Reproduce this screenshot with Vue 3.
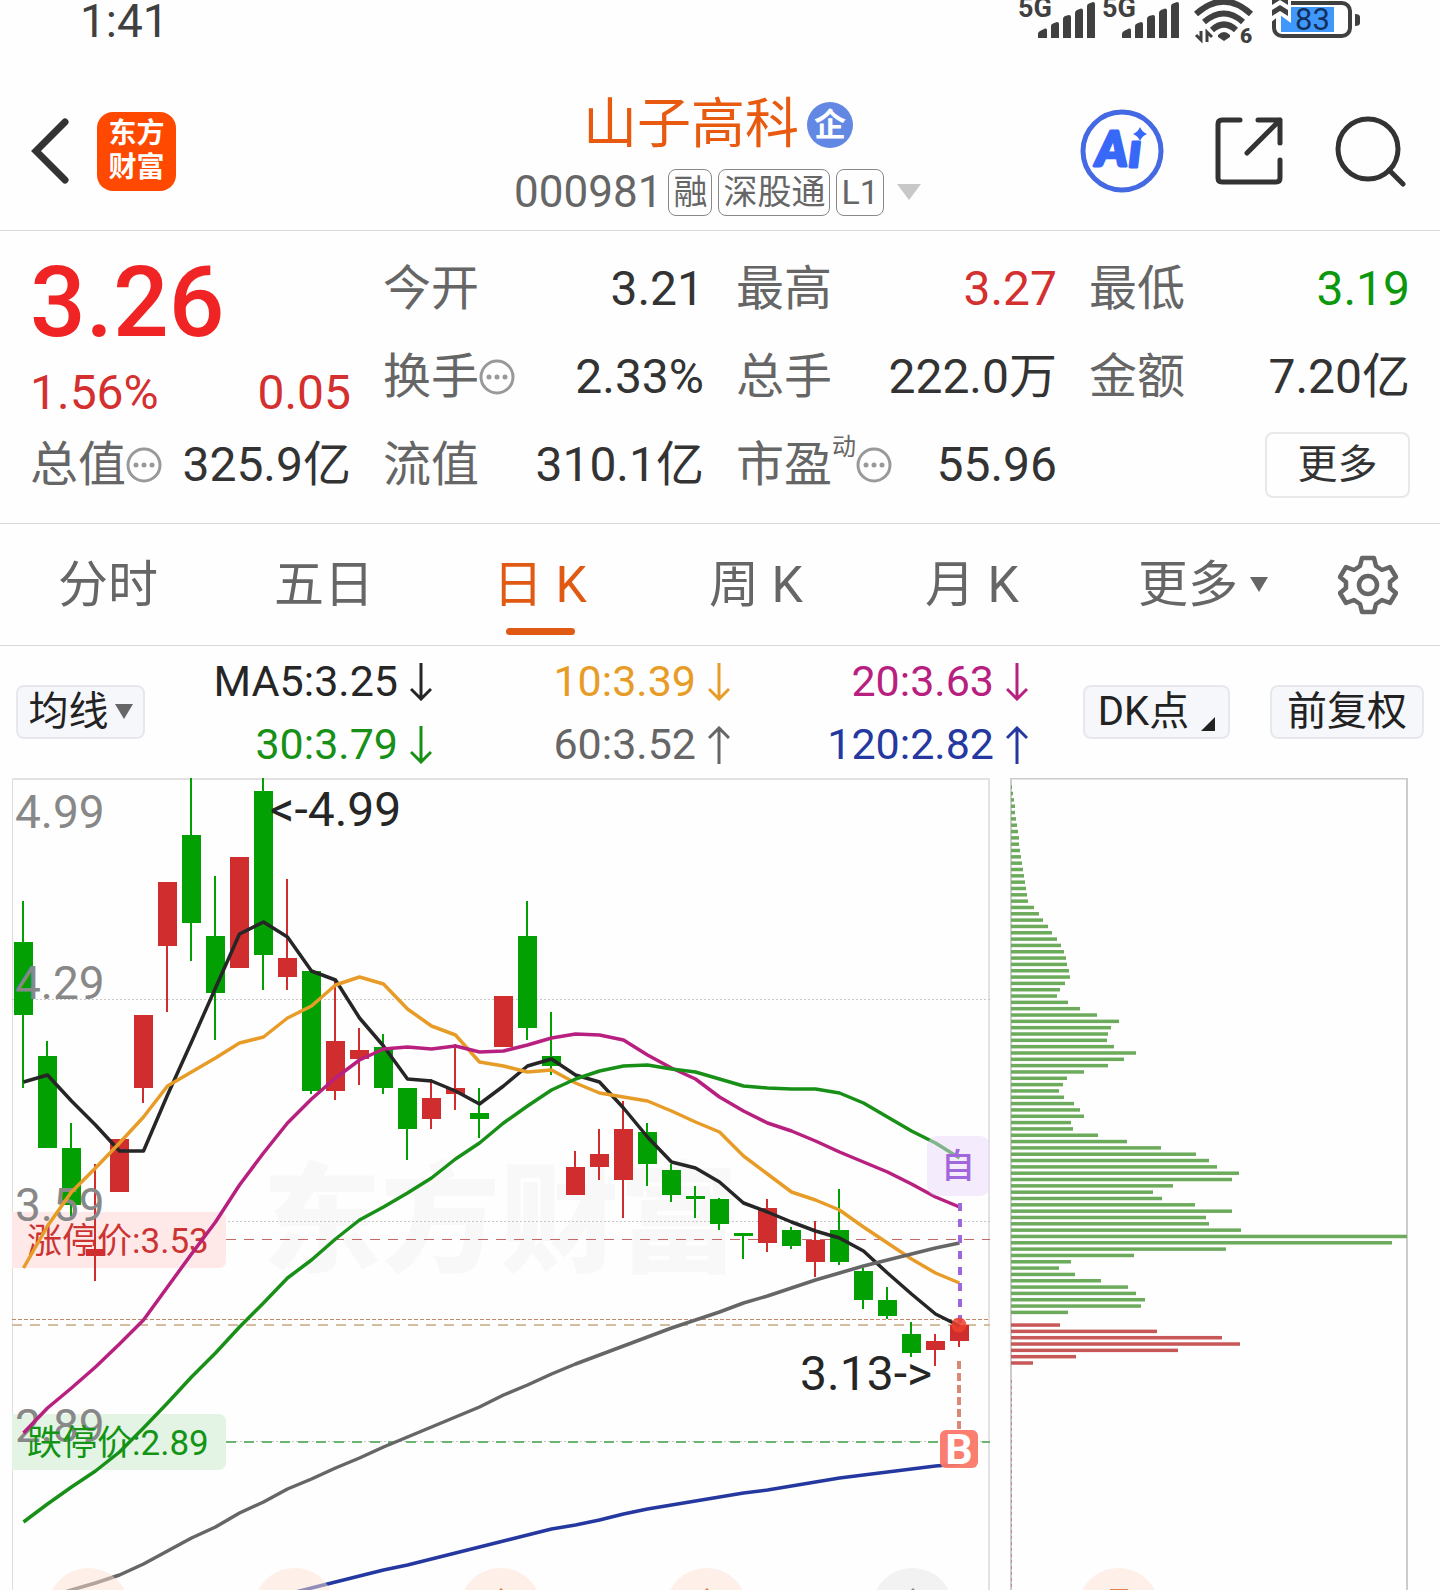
<script setup>
import { ref } from 'vue'

const activeTab = ref('日 K')
const tabs = ['分时', '五日', '日 K', '周 K', '月 K']

const quotes = [
  { label: '今开', value: '3.21' },
  { label: '最高', value: '3.27', tone: 'up' },
  { label: '最低', value: '3.19', tone: 'down' },
  { label: '换手', value: '2.33%', info: true },
  { label: '总手', value: '222.0万' },
  { label: '金额', value: '7.20亿' },
  { label: '总值', value: '325.9亿', info: true },
  { label: '流值', value: '310.1亿' },
  { label: '市盈', value: '55.96', sup: '动', info: true }
]

const averages = [
  { name: 'ma5', text: 'MA5:3.25', up: false },
  { name: 'ma10', text: '10:3.39', up: false },
  { name: 'ma20', text: '20:3.63', up: false },
  { name: 'ma30', text: '30:3.79', up: false },
  { name: 'ma60', text: '60:3.52', up: true },
  { name: 'ma120', text: '120:2.82', up: true }
]

// [color, high, body top, body bottom, low]
const candles = [
  ['g', 901, 942, 1015, 1088], ['g', 1041, 1056, 1148, 1148], ['g', 1123, 1148, 1205, 1216],
  ['r', 1164, 1249, 1256, 1281], ['r', 1139, 1139, 1192, 1192], ['r', 1015, 1015, 1088, 1103],
  ['r', 882, 882, 946, 1012], ['g', 778, 835, 923, 961], ['g', 876, 936, 993, 1040],
  ['r', 857, 857, 968, 968], ['g', 778, 791, 955, 990], ['r', 879, 958, 977, 990],
  ['g', 971, 971, 1091, 1094], ['r', 981, 1041, 1091, 1100], ['r', 1028, 1050, 1059, 1085],
  ['g', 1034, 1047, 1088, 1094], ['g', 1088, 1088, 1129, 1160], ['r', 1079, 1098, 1119, 1129],
  ['r', 1044, 1088, 1094, 1110], ['g', 1088, 1113, 1119, 1138], ['r', 996, 996, 1047, 1047],
  ['g', 901, 936, 1028, 1040], ['g', 1012, 1056, 1066, 1075], ['r', 1151, 1167, 1195, 1195],
  ['r', 1129, 1154, 1167, 1180], ['r', 1101, 1129, 1180, 1218], ['g', 1123, 1132, 1164, 1186],
  ['g', 1164, 1170, 1195, 1202], ['g', 1186, 1196, 1199, 1218], ['g', 1198, 1199, 1224, 1230],
  ['g', 1233, 1233, 1236, 1259], ['r', 1199, 1208, 1243, 1252], ['g', 1227, 1230, 1246, 1249],
  ['r', 1221, 1240, 1262, 1277], ['g', 1189, 1230, 1262, 1265], ['g', 1268, 1271, 1300, 1309],
  ['g', 1287, 1300, 1316, 1319], ['g', 1322, 1334, 1353, 1357], ['r', 1334, 1341, 1350, 1366],
  ['r', 1325, 1325, 1341, 1347]
]

const lines = {
  ma5: [1082, 1075, 1101, 1125, 1151, 1151, 1095, 1042, 988, 934, 922, 937, 971, 980, 1018, 1046, 1079, 1081, 1091, 1104, 1086, 1066, 1059, 1075, 1082, 1108, 1137, 1162, 1168, 1182, 1203, 1212, 1222, 1231, 1238, 1251, 1273, 1294, 1314, 1326],
  ma10: [1268, 1226, 1192, 1168, 1143, 1117, 1086, 1072, 1058, 1043, 1037, 1018, 1006, 985, 977, 984, 1009, 1026, 1035, 1062, 1066, 1072, 1070, 1083, 1093, 1097, 1101, 1111, 1122, 1132, 1156, 1174, 1192, 1200, 1210, 1227, 1243, 1259, 1273, 1283],
  ma20: [1433, 1408, 1388, 1367, 1344, 1320, 1287, 1254, 1222, 1185, 1153, 1123, 1099, 1078, 1060, 1049, 1047, 1049, 1046, 1052, 1051, 1045, 1038, 1034, 1035, 1040, 1055, 1068, 1079, 1097, 1111, 1123, 1131, 1141, 1152, 1162, 1172, 1184, 1197, 1207],
  ma30: [1522, 1504, 1487, 1471, 1452, 1428, 1403, 1377, 1353, 1327, 1303, 1278, 1260, 1239, 1220, 1207, 1193, 1178, 1159, 1143, 1123, 1106, 1090, 1079, 1071, 1066, 1065, 1069, 1072, 1079, 1086, 1088, 1089, 1089, 1093, 1103, 1117, 1131, 1143, 1158],
  ma60: [1605, 1597, 1590, 1583, 1575, 1564, 1551, 1538, 1527, 1513, 1502, 1489, 1479, 1468, 1458, 1447, 1437, 1427, 1417, 1407, 1395, 1385, 1374, 1364, 1355, 1346, 1337, 1328, 1320, 1312, 1303, 1296, 1288, 1280, 1273, 1266, 1260, 1254, 1248, 1243],
  ma120: [1662, 1656, 1650, 1644, 1638, 1632, 1626, 1619, 1613, 1607, 1600, 1594, 1588, 1582, 1576, 1570, 1565, 1559, 1553, 1547, 1541, 1535, 1529, 1525, 1520, 1514, 1509, 1505, 1501, 1497, 1493, 1490, 1486, 1482, 1478, 1475, 1472, 1469, 1466, 1464]
}

const step = 24
const centerX = (i) => 23.5 + i * step
const toPoints = (ys) => ys.map((y, i) => `${centerX(i)},${y}`).join(' ')

const gridLines = [999, 1221, 1441]
const axisLabels = [
  { text: '4.99', y: 828 },
  { text: '4.29', y: 999 },
  { text: '3.59', y: 1221 },
  { text: '2.89', y: 1442 }
]

// 筹码分布，自上而下
const chips = [
  1, 2, 3, 4, 4, 5, 6, 7, 8, 8, 9, 10, 11, 12, 13, 14, 15, 16, 17, 23,
  28, 32, 37, 41, 46, 50, 53, 55, 56, 58, 59, 54, 49, 46, 57, 69, 86, 108, 100, 97,
  96, 103, 125, 113, 97, 73, 56, 52, 48, 53, 63, 69, 73, 60, 62, 87, 116, 150, 185, 198,
  206, 228, 221, 162, 142, 151, 184, 221, 195, 198, 230, 396, 381, 215, 123, 60, 48, 64, 90, 117,
  125, 134, 130, 57, 0, 49, 146, 211, 229, 167, 65, 22
]
const chipY = (i) => 785.5 + i * 6.327

const tools = ['诊股', '资讯', '提醒', '交易', '更多', '自选']
</script>

<template>
  <div class="page">
    <!-- 状态栏 -->
    <div class="status-bar">
      <span class="clock">1:41</span>
      <svg class="status-icons" viewBox="1016 0 348 46" aria-hidden="true">
        <g v-for="dx in [0, 84]" :key="dx" :transform="`translate(${dx} 0)`" fill="#404040">
          <text x="1018" y="17" class="net">5G</text>
          <path d="M1038 38v-4q0-2 2-3l5-2.500q2-.5 2 1.500v8zM1051 38v-12q0-2 2-2.500l4-1.500q2 0 2 2v14zM1063 38v-19q0-2 2-3l4-1q2 0 2 2v21zM1075 38v-25q0-2 2-3l4-1.500q2 0 2 2v27.500zM1087 38v-32q0-2 2-2.500l4-1.500q2 0 2 2v34z" />
        </g>
        <g fill="none" stroke="#404040" stroke-width="6">
          <path d="M1196 14q28-25 55 0" />
          <path d="M1204 22q20-17 39 0" />
          <path d="M1212 30q12-11 24 0" />
        </g>
        <path d="M1218 35q6-6 12 0v2l-6 4-6-4z" fill="#404040" />
        <path d="M1201 31v9l-5-5M1207 42v-10l5 5" fill="none" stroke="#404040" stroke-width="3" />
        <text x="1240" y="43" class="wifi-six">6</text>
        <rect x="1274" y="3" width="76" height="33" rx="8" fill="#fff" stroke="#404040" stroke-width="4" />
        <rect x="1281" y="7" width="53" height="25" fill="#4098fc" />
        <path d="M1355 14q5 0 5 3v6q0 3-5 3z" fill="#404040" />
        <path d="M1270-2h21v25l-11-8-10 8z" fill="#fefefe" />
        <path d="M1272 5v-6l8-5 8 5v6l-8-5zM1272 16v-6l8-5 8 5v6l-8-5z" fill="#404040" />
        <text x="1295" y="30" class="battery">83</text>
      </svg>
    </div>

    <!-- 顶部导航 -->
    <header class="nav">
      <div class="nav-side">
        <button class="icon-button" aria-label="返回">
          <svg width="40" height="68" viewBox="0 0 40 68">
            <path d="M35 5L6 34l29 29" fill="none" stroke="#333" stroke-width="7" stroke-linecap="round" stroke-linejoin="miter" />
          </svg>
        </button>
        <a class="logo" href="#">东方<br />财富</a>
      </div>
      <div class="stock">
        <h1 class="stock-name">山子高科<span class="company">企</span></h1>
        <div class="stock-meta">
          <span class="code">000981</span>
          <span class="tag">融</span>
          <span class="tag">深股通</span>
          <span class="tag">L1</span>
          <svg class="meta-arrow" width="26" height="18" viewBox="0 0 26 18"><path d="M1 1h24L13 17z" fill="#c8c8c8" /></svg>
        </div>
      </div>
      <div class="nav-side nav-actions">
        <button class="icon-button" aria-label="AI">
          <svg width="84" height="84" viewBox="0 0 84 84">
            <circle cx="42" cy="42" r="39" fill="none" stroke="#4469e2" stroke-width="5" />
            <text x="16" y="57" class="ai">A</text>
            <text x="49" y="58" class="ai">ı</text>
            <path d="M60 18q2 5 7 7-5 2-7 7-2-5-7-7 5-2 7-7z" fill="#3868f8" />
          </svg>
        </button>
        <button class="icon-button" aria-label="分享">
          <svg width="68" height="68" viewBox="0 0 68 68" fill="none" stroke="#333" stroke-width="5" stroke-linecap="round" stroke-linejoin="round">
            <path d="M25 3H7Q3 3 3 7v54q0 4 4 4h54q4 0 4-4V43M43 3h22v23M65 3L32 36" />
          </svg>
        </button>
        <button class="icon-button" aria-label="搜索">
          <svg width="72" height="72" viewBox="0 0 72 72" fill="none" stroke="#333" stroke-width="5" stroke-linecap="round">
            <circle cx="34" cy="34" r="30" />
            <path d="M55 55l14 14" />
          </svg>
        </button>
      </div>
    </header>

    <!-- 行情数据 -->
    <section class="quote">
      <div class="price">
        <strong class="price-now">3.26</strong>
        <div class="price-change"><span>1.56%</span><span>0.05</span></div>
      </div>
      <div v-for="item in quotes" :key="item.label" class="quote-item">
        <span class="quote-label">
          {{ item.label }}<sup v-if="item.sup">{{ item.sup }}</sup>
          <svg v-if="item.info" width="36" height="36" viewBox="0 0 36 36" fill="#999">
            <circle cx="18" cy="18" r="16" fill="none" stroke="#999" stroke-width="3" />
            <circle cx="10" cy="18" r="2.500" />
            <circle cx="18" cy="18" r="2.500" />
            <circle cx="26" cy="18" r="2.500" />
          </svg>
        </span>
        <span class="quote-value" :class="item.tone">{{ item.value }}</span>
      </div>
      <div class="quote-more">
        <button class="more-button">更多</button>
      </div>
    </section>

    <!-- 周期切换 -->
    <nav class="tabs">
      <button
        v-for="tab in tabs"
        :key="tab"
        class="tab"
        :class="{ active: tab === activeTab }"
        @click="activeTab = tab"
      >
        {{ tab }}
      </button>
      <button class="tab tab-more">
        更多
        <svg width="18" height="16" viewBox="0 0 18 16"><path d="M0 0h18L9 15z" fill="#666" /></svg>
      </button>
      <button class="tab" aria-label="设置">
        <svg width="60" height="60" viewBox="0 0 60 60" fill="none" stroke="#666" stroke-width="4.500" stroke-linejoin="round">
          <path d="M24 3h12l2 8 6 4 8-3 6 10-6 5v6l6 5-6 10-8-3-6 4-2 8H24l-2-8-6-4-8 3-6-10 6-5v-6l-6-5 6-10 8 3 6-4z" />
          <circle cx="30" cy="30" r="9" />
        </svg>
      </button>
    </nav>

    <!-- 均线 -->
    <section class="indicator">
      <button class="chip-button">
        均线
        <svg width="18" height="16" viewBox="0 0 18 16"><path d="M0 0h18L9 15z" fill="#666" /></svg>
      </button>
      <div class="averages">
        <span v-for="item in averages" :key="item.name" class="average" :class="item.name">
          {{ item.text }}
          <svg width="22" height="38" viewBox="0 0 22 38" fill="none" stroke="currentColor" stroke-width="3">
            <path v-if="item.up" d="M11 38V2M1 12L11 2l10 10" />
            <path v-else d="M11 0v36M1 26l10 10 10-10" />
          </svg>
        </span>
      </div>
      <button class="chip-button dk">
        DK点
        <svg width="14" height="14" viewBox="0 0 14 14"><path d="M14 0v14H0z" fill="#222" /></svg>
      </button>
      <button class="chip-button adjust">前复权</button>
    </section>

    <!-- K线图 -->
    <section class="charts">
      <svg class="chart" viewBox="12 778 978 812">
        <text x="262" y="1263" class="watermark">东方财富</text>
        <path d="M12.500 1590V778" stroke="#ddd" />
        <path d="M12 779h977v811" fill="none" stroke="#e2e2e2" stroke-width="2" />
        <line v-for="y in gridLines" :key="y" x1="12" x2="990" :y1="y + 0.5" :y2="y + 0.5" stroke="#c8c8c8" stroke-dasharray="2 2" />

        <path d="M12 1212h206q8 0 8 8v40q0 8-8 8H12z" fill="#ffe8e8" />
        <path d="M12 1414h206q8 0 8 8v40q0 8-8 8H12z" fill="#e3f4e5" />
        <path d="M226 1239.500h764" stroke="#c4686a" stroke-dasharray="10 8" />
        <path d="M226 1442h764" stroke="#6cb570" stroke-width="2" stroke-dasharray="10 8" />
        <path d="M12 1319.500h978" stroke="#c08868" stroke-dasharray="4 2" />
        <path d="M12 1325h978" stroke="#d4bda0" stroke-width="2" stroke-dasharray="10 8" />
        <text x="27" y="1253" class="limit limit-up">涨停价:3.53</text>

        <g v-for="(c, i) in candles" :key="i" :class="c[0] === 'r' ? 'candle-up' : 'candle-down'">
          <rect :x="centerX(i) - 1.5" :y="c[1]" width="2" :height="c[4] - c[1]" />
          <rect :x="centerX(i) - 9.5" :y="c[2]" width="19" :height="c[3] - c[2]" />
        </g>

        <text v-for="label in axisLabels" :key="label.text" x="15" :y="label.y" class="axis">{{ label.text }}</text>
        <text x="27" y="1455" class="limit limit-down">跌停价:2.89</text>
        <polyline v-for="(ys, name) in lines" :key="name" :points="toPoints(ys)" class="line" :class="name" />

        <text x="270" y="826" class="mark">&lt;-4.99</text>
        <text x="932" y="1390" class="mark" text-anchor="end">3.13-&gt;</text>

        <path d="M960 1203v122" stroke="#a066dc" stroke-width="4" stroke-dasharray="8 8" />
        <path d="M959 1361v68" stroke="#db8779" stroke-width="4" stroke-dasharray="8 4" />
        <circle cx="959" cy="1325" r="7.500" fill="#f0402c" opacity="0.850" />
        <rect x="927" y="1136" width="63" height="60" rx="10" fill="#ead8fc" opacity="0.500" />
        <text x="958" y="1178" class="self" text-anchor="middle">自</text>
        <rect x="940" y="1430" width="38" height="38" rx="6" fill="#fa7868" opacity="0.950" />
        <text x="959" y="1464" class="buy" text-anchor="middle">B</text>
      </svg>

      <svg class="chart" viewBox="1010 778 398 812">
        <path d="M1011 1590V778.500h396V1590" fill="none" stroke="#ccc" stroke-width="2" />
        <path d="M1011.500 1380v210" stroke="#c08888" stroke-dasharray="3 3" />
        <rect
          v-for="(w, i) in chips"
          :key="i"
          x="1011"
          :y="chipY(i)"
          :width="w"
          height="3.500"
          :fill="i > 84 ? '#c85858' : '#6cab5c'"
        />
      </svg>
    </section>

    <!-- 底部悬浮工具 -->
    <nav class="tools">
      <button v-for="(tool, i) in tools" :key="tool" class="tool" :class="{ muted: i === 4 }" :aria-label="tool">
        <svg v-if="i === 5" width="18" height="4" viewBox="0 0 18 4"><path d="M0 2h18v2H0z" fill="#e0824a" /></svg>
        <svg v-else-if="i > 1" width="6" height="4" viewBox="0 0 6 4"><path d="M3 1l3 3H0z" :fill="i === 4 ? '#888' : '#e0824a'" /></svg>
      </button>
    </nav>
  </div>
</template>

<style>
body {
  margin: 0;
  background: #fefefe;
}
</style>

<style scoped>
.page {
  position: relative;
  overflow: hidden;
  font-family: Roboto, "Noto Sans CJK SC", sans-serif;
  color: #333;
  background: #fefefe;
}

button {
  padding: 0;
  border: none;
  background: none;
  font: inherit;
  color: inherit;
  cursor: pointer;
}

svg {
  display: block;
  flex-shrink: 0;
}

/* 状态栏 */
.status-bar {
  display: flex;
  justify-content: space-between;
  height: 72px;
  padding: 0 76px 0 80px;
}

.clock {
  font-size: 46px;
  line-height: 42px;
  color: #404040;
}

.status-icons {
  width: 348px;
  height: 46px;
}

.net {
  font-size: 27px;
  font-weight: 700;
}

.wifi-six {
  font-size: 21px;
  font-weight: 900;
  fill: #404040;
}

.battery {
  font-size: 31px;
  fill: #12305c;
}

/* 顶部导航 */
.nav {
  display: grid;
  grid-template-columns: 1fr auto 1fr;
  align-items: center;
  height: 158px;
  padding: 0 34px 0 30px;
  border-bottom: 1px solid #d8d8d8;
}

.nav-side {
  display: flex;
  align-items: center;
  gap: 27px;
}

.nav-actions {
  justify-content: flex-end;
  gap: 51px;
}

.logo {
  width: 79px;
  height: 79px;
  box-sizing: border-box;
  padding-top: 5px;
  border-radius: 16px;
  background: #ff4800;
  color: #fff;
  font-size: 28px;
  font-weight: 700;
  line-height: 34px;
  text-align: center;
  text-decoration: none;
}

.stock {
  display: flex;
  flex-direction: column;
  align-items: center;
  padding-top: 12px;
}

.stock-name {
  display: flex;
  align-items: center;
  gap: 8px;
  margin: 0;
  font-size: 54px;
  font-weight: 400;
  line-height: 70px;
  color: #e85a10;
}

.company {
  width: 46px;
  height: 46px;
  border-radius: 50%;
  background: #6288e4;
  color: #fff;
  font-size: 32px;
  font-weight: 700;
  line-height: 46px;
  text-align: center;
}

.stock-meta {
  display: flex;
  align-items: center;
  gap: 6px;
  color: #666;
}

.code {
  font-size: 44px;
  line-height: 64px;
}

.tag {
  padding: 0 4px;
  border: 1px solid #888;
  border-radius: 8px;
  font-size: 34px;
  line-height: 45px;
}

.meta-arrow {
  margin-left: 6px;
}

.ai {
  font-family: Lato, sans-serif;
  font-size: 48px;
  font-style: italic;
  font-weight: 900;
  fill: #3868f8;
  stroke: #3868f8;
  stroke-width: 3;
  stroke-linejoin: round;
}

/* 行情数据 */
.quote {
  display: grid;
  grid-template-columns: repeat(4, 1fr);
  grid-auto-rows: 88px;
  column-gap: 32px;
  padding: 14px 30px;
  border-bottom: 1px solid #d8d8d8;
  font-size: 48px;
  line-height: 56px;
}

.price {
  grid-row: span 2;
  color: #d43030;
}

.price-now {
  display: block;
  font-size: 98px;
  font-weight: 500;
  line-height: 116px;
  color: #f02424;
}

.price-change {
  display: flex;
  justify-content: space-between;
  line-height: 64px;
}

.quote-item {
  display: flex;
  align-items: center;
  justify-content: space-between;
  white-space: nowrap;
}

.quote-label {
  display: flex;
  align-items: center;
  color: #666;
}

.quote-label sup {
  align-self: flex-start;
  font-size: 24px;
  line-height: 20px;
}

.up {
  color: #d43030;
}

.down {
  color: #0c980c;
}

.quote-more {
  display: flex;
  align-items: center;
  justify-content: flex-end;
}

.more-button {
  width: 145px;
  height: 66px;
  border: 2px solid #e6e8ea;
  border-radius: 8px;
  font-size: 40px;
}

/* 周期切换 */
.tabs {
  display: grid;
  grid-template-columns: repeat(6, 3fr) 2fr;
  height: 121px;
  border-bottom: 1px solid #d8d8d8;
}

.tab {
  position: relative;
  display: flex;
  align-items: center;
  justify-content: center;
  font-size: 50px;
  line-height: 60px;
  color: #666;
}

.tab.active {
  color: #e05a14;
}

.tab.active::after {
  content: '';
  position: absolute;
  bottom: 10px;
  width: 69px;
  height: 7px;
  border-radius: 4px;
  background: #e05a14;
}

.tab-more {
  gap: 12px;
  padding-left: 30px;
}

/* 均线 */
.indicator {
  display: flex;
  align-items: center;
  height: 132px;
  padding: 0 16px;
}

.averages {
  flex: 1;
  display: grid;
  grid-template-columns: 287fr 298fr 298fr;
  margin-right: 55px;
  padding-top: 2px;
}

.average {
  display: flex;
  align-items: center;
  justify-content: flex-end;
  gap: 12px;
  font-size: 43px;
  line-height: 63px;
}

.chip-button {
  display: flex;
  align-items: center;
  justify-content: center;
  gap: 6px;
  box-sizing: border-box;
  width: 129px;
  height: 54px;
  border: 2px solid #e6e8ec;
  border-radius: 8px;
  background: #f6f7fa;
  font-size: 40px;
  line-height: 50px;
  color: #222;
}

.dk {
  width: 147px;
  gap: 12px;
}

.dk svg {
  align-self: flex-end;
  margin-bottom: 6px;
}

.adjust {
  width: 154px;
  margin-left: 40px;
}

.ma5 { color: #262626; }
.ma10 { color: #e89c28; }
.ma20 { color: #b82080; }
.ma30 { color: #189018; }
.ma60 { color: #666; }
.ma120 { color: #2438a0; }

/* 图表 */
.charts {
  display: grid;
  grid-template-columns: 978fr 398fr;
  gap: 20px;
  padding: 0 32px 0 12px;
}

.chart {
  width: 100%;
  height: auto;
}

.line {
  fill: none;
  stroke: currentColor;
  stroke-width: 3.5;
  stroke-linejoin: round;
}

.candle-up {
  fill: #d02e2e;
}

.candle-down {
  fill: #03a003;
}

.axis {
  font-size: 46px;
  fill: #888;
}

.mark {
  font-size: 48px;
  fill: #262626;
}

.limit {
  font-size: 35px;
}

.limit-up {
  fill: #cc3434;
}

.limit-down {
  fill: #149414;
}

.watermark {
  font-size: 119px;
  font-weight: 900;
  fill: #f8f8f8;
}

.self {
  font-size: 34px;
  font-weight: 500;
  fill: #a066dc;
}

.buy {
  font-size: 43px;
  font-weight: 700;
  fill: #fff;
}

/* 底部悬浮工具 */
.tools {
  position: absolute;
  left: 48px;
  right: 281px;
  bottom: -59px;
  display: flex;
  justify-content: space-between;
}

.tool {
  display: flex;
  justify-content: center;
  width: 81px;
  height: 81px;
  padding-top: 19px;
  border-radius: 50%;
  background: rgba(254, 226, 210, 0.5);
}

.tool.muted {
  background: #f2f2f2;
}
</style>
